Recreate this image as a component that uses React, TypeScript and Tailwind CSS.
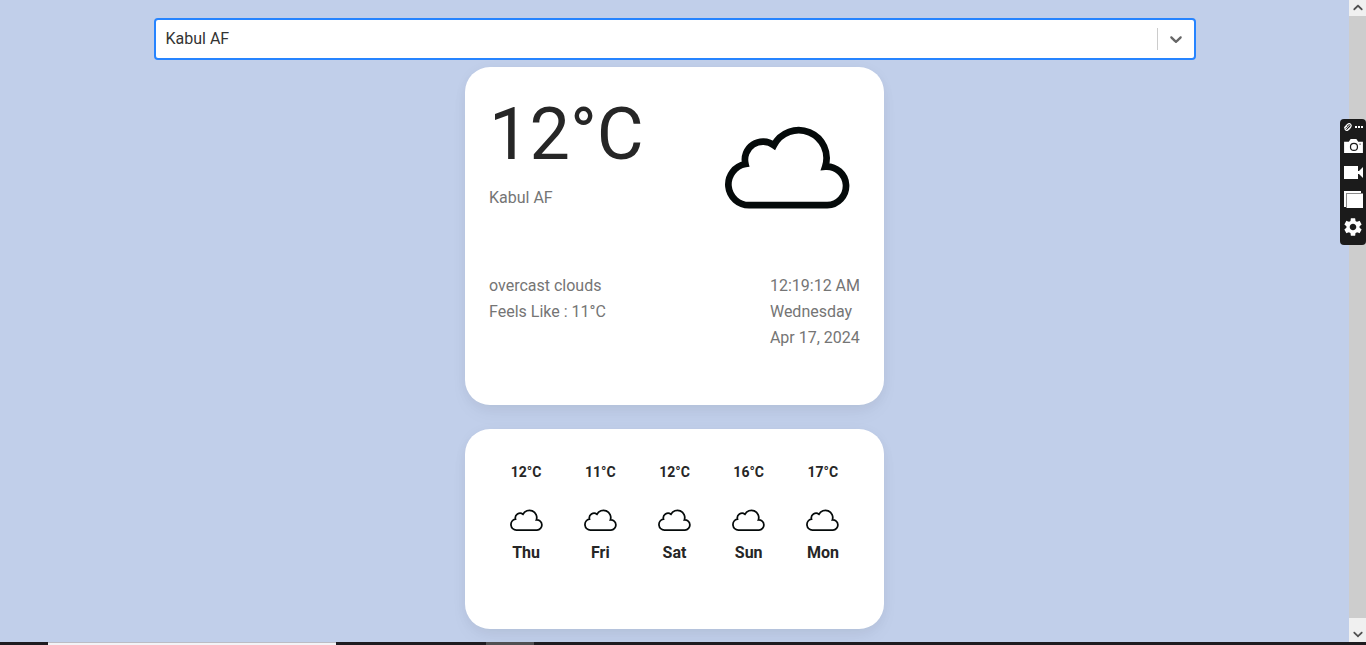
import { useState } from "react";
import type { ReactNode } from "react";
import { MdSettings } from "react-icons/md";

const forecast = [
  { day: "Thu", temp: "12°C" },
  { day: "Fri", temp: "11°C" },
  { day: "Sat", temp: "12°C" },
  { day: "Sun", temp: "16°C" },
  { day: "Mon", temp: "17°C" },
];

function Cloud({ className }: { className: string }) {
  return (
    <svg viewBox="75 47 373 250" className={className} fill="none" stroke="#050a0a" strokeWidth="20" aria-hidden="true">
      <path d="M148 286A62 62 0 0 1 136 163A54 54 0 0 1 221 107A83.200 83.200 0 0 1 374 171A57.600 57.600 0 1 1 380 286Z" />
    </svg>
  );
}

function Chevron({ className }: { className: string }) {
  return (
    <svg viewBox="0 0 20 20" className={className} fill="currentColor" aria-hidden="true">
      <path d="M4.516 7.548c0.436-0.446 1.043-0.481 1.576 0l3.908 3.747 3.908-3.747c0.533-0.481 1.141-0.446 1.574 0 0.436 0.445 0.408 1.197 0 1.615-0.406 0.418-4.695 4.502-4.695 4.502-0.217 0.223-0.502 0.335-0.787 0.335s-0.57-0.112-0.789-0.335c0 0-4.287-4.084-4.695-4.502s-0.436-1.17 0-1.615z" />
    </svg>
  );
}

function CitySelect() {
  const [city, setCity] = useState("Kabul AF");
  return (
    <div className="relative w-full max-w-[1042px]">
      <select
        aria-label="City"
        value={city}
        onChange={(e) => setCity(e.target.value)}
        className="block h-[42px] w-full appearance-none rounded border-2 border-[#2684ff] bg-white pr-12 pl-2.5 text-base text-[#333333] outline-none"
      >
        <option>Kabul AF</option>
      </select>
      <div className="pointer-events-none absolute inset-y-2.5 right-2.5 flex items-center gap-2 text-[#666666]">
        <span className="h-full w-px bg-[#cccccc]" />
        <Chevron className="size-5" />
      </div>
    </div>
  );
}

function Card({ children, className }: { children: ReactNode; className: string }) {
  return (
    <section
      className={`w-full max-w-[419px] rounded-[25px] bg-white px-6 shadow-[0_2px_15px_-3px_rgba(0,0,0,0.07),0_10px_20px_-2px_rgba(0,0,0,0.04)] ${className}`}
    >
      {children}
    </section>
  );
}

function CaptureTools() {
  return (
    <div className="fixed top-[119px] right-0 flex h-[126px] w-[26px] flex-col items-center rounded bg-[#1b1b1b] pt-1 text-white">
      <svg viewBox="0 0 20 8" className="block h-2 w-5" aria-hidden="true">
        <ellipse cx="5" cy="4" rx="3.800" ry="2.300" transform="rotate(-50 5 4)" fill="none" stroke="white" strokeWidth="1.200" />
        <path d="M1 4.500L4 3.200M4.500 7.500L6.500 4.500M2.500 6.500L6.500 2" stroke="white" strokeWidth="1" />
        <path d="M12 3h2v2h-2zM15 3h2v2h-2zM18 3h2v2h-2z" fill="white" />
      </svg>
      <button type="button" aria-label="Take photo" className="mt-[7px] block">
        <svg viewBox="0 0 20 17" className="block h-4 w-[19px]">
          <path d="M0 4h5l2-3h6l2 3h5v12H0z" fill="white" />
          <circle cx="10.500" cy="9.500" r="3.700" fill="white" stroke="#1b1b1b" strokeWidth="1.300" />
          <circle cx="17" cy="6.500" r="0.700" fill="#1b1b1b" />
        </svg>
      </button>
      <button type="button" aria-label="Record video" className="mt-3 block">
        <svg viewBox="0 0 19 13" className="block h-[13px] w-[19px]" fill="white">
          <path d="M0 0h14v13H0zM19 1v11l-4-4V5z" />
          <path d="M14 5h2v3h-2z" />
        </svg>
      </button>
      <button type="button" aria-label="Gallery" className="mt-3 block">
        <svg viewBox="0 0 19 17" className="block h-[17px] w-[19px]">
          <path d="M0 0h17v16H0z" fill="white" />
          <path d="M2 2h17v15H2z" fill="#8c8c8c" />
          <path d="M3 3h16v14H3z" fill="white" />
        </svg>
      </button>
      <button type="button" aria-label="Settings" className="mt-2 block">
        <MdSettings className="size-[22px]" />
      </button>
    </div>
  );
}

export default function App() {
  return (
    <div className="flex min-h-screen flex-col bg-[#c1cfea] font-[Roboto,sans-serif] text-base text-[#262626]">
      <div className="flex flex-1">
        <main className="flex flex-1 flex-col items-center px-4 pt-[18px]">
          <CitySelect />
          <Card className="mt-[7px] h-[338px] pt-8">
            <div className="flex items-start justify-between">
              <div>
                <h1 className="text-[72px] leading-[72px]">12°C</h1>
                <p className="mt-3.5 leading-[26px] text-[#757575]">Kabul AF</p>
              </div>
              <Cloud className="mt-[26px] mr-2.5 h-[84px] w-[125px]" />
            </div>
            <div className="mt-[62px] flex justify-between leading-[26px] text-[#757575]">
              <div>
                <p>overcast clouds</p>
                <p>Feels Like : 11°C</p>
              </div>
              <div>
                <p>12:19:12 AM</p>
                <p>Wednesday</p>
                <p>Apr 17, 2024</p>
              </div>
            </div>
          </Card>
          <Card className="mt-6 h-[200px] pt-8">
            <ul className="grid grid-cols-5 font-bold">
              {forecast.map((f) => (
                <li key={f.day} className="flex flex-col items-center">
                  <span className="text-sm leading-[22px]">{f.temp}</span>
                  <Cloud className="mt-[26px] h-[22px] w-[33px]" />
                  <span className="mt-[9px] leading-[26px]">{f.day}</span>
                </li>
              ))}
            </ul>
          </Card>
        </main>
        <div className="flex w-[17px] flex-col bg-[#cdcdcd] text-[#505050]">
          <button type="button" aria-label="Scroll up" className="flex h-4 items-center justify-center bg-[#f0f0f0]">
            <Chevron className="size-4 rotate-180" />
          </button>
          <div className="flex-1" />
          <button type="button" aria-label="Scroll down" className="flex h-6 items-center justify-center bg-[#f0f0f0] pt-2">
            <Chevron className="size-4" />
          </button>
        </div>
      </div>
      <footer className="flex h-[3px] bg-[#1e1c20]">
        <div className="ml-12 w-72 border-t border-[#bcbcc4] bg-[#f3f3f6]" />
        <div className="ml-[150px] w-12 bg-[#505052]" />
      </footer>
      <CaptureTools />
    </div>
  );
}
